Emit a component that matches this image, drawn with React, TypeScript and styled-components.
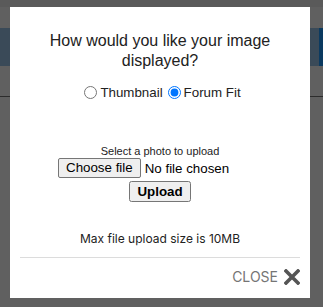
import React, { useState } from 'react';
import styled, { createGlobalStyle } from 'styled-components';

const GlobalStyle = createGlobalStyle`
    html, body {
        margin: 0;
        padding: 0;
        background: #606060;
        font-family: 'Liberation Sans', Arial, sans-serif;
        overflow: hidden;
    }
`;

const Page = styled.div`
    width: 323px;
    height: 307px;
    display: flex;
    flex-direction: column;
    background: #606060;
`;

const TopStrip = styled.div`
    height: 7px;
    background: #5a5a5a;
`;

const Spacer = styled.div<{ $h: number }>`
    height: ${p => p.$h}px;
`;

const Band = styled.div`
    height: 38px;
    background: #3a4a58;
    display: flex;
    justify-content: flex-end;
    .accent{
        width: 4px;
        background: #0b3a60;
    }
`;

const Rule = styled.div`
    height: 1px;
    background: #2c2c2c;
`;

const Modal = styled.div`
    position: fixed;
    left: 10px;
    top: 7px;
    width: 300px;
    height: 291px;
    box-sizing: border-box;
    background: #fff;
    padding: 24px 10px 0;
    display: flex;
    flex-direction: column;
    align-items: stretch;
    text-align: center;
    color: #222;
`;

const Title = styled.h2`
    margin: 0;
    font-size: 16px;
    line-height: 20px;
    font-weight: normal;
    color: #222;
`;

const RadioRow = styled.div`
    margin-top: 14px;
    font-size: 13.333px;
    display: flex;
    justify-content: center;
    align-items: center;
    label{
        display: flex;
        align-items: center;
    }
    input{
        margin: 0 3px 0 5px;
    }
`;

const UploadForm = styled.form`
    margin-top: 45px;
    display: flex;
    flex-direction: column;
    align-items: center;
`;

const Hint = styled.div`
    font-size: 11px;
    line-height: 13px;
`;

const FileRow = styled.label`
    width: 204px;
    display: flex;
    align-items: center;
    gap: 4px;
    font-size: 13.333px;
    cursor: pointer;
    input{
        display: none;
    }
`;

const ChooseButton = styled.span`
    box-sizing: border-box;
    height: 20px;
    padding: 1px 7px;
    line-height: 16px;
    border: 1px solid #767676;
    border-radius: 2px;
    background: #efefef;
    color: #000;
`;

const FileName = styled.span`
    color: #000;
    white-space: nowrap;
`;

const UploadButton = styled.button`
    margin-top: 3px;
    font-weight: bold;
    font-size: 13.333px;
    font-family: 'Liberation Sans', Arial, sans-serif;
`;

const SizeNote = styled.p`
    margin: 29px 0 0;
    font-family: Inter, sans-serif;
    font-size: 12px;
    line-height: 16px;
    color: #222;
`;

const Divider = styled.hr`
    margin: 10px 0 0;
    border: none;
    border-top: 1px solid #dcdcdc;
`;

const Footer = styled.div`
    margin-top: 10px;
    display: flex;
    justify-content: flex-end;
    align-items: center;
    gap: 6px;
`;

const CloseLabel = styled.span`
    font-family: Inter, sans-serif;
    font-size: 14px;
    color: #757575;
`;

const CloseIcon = () => (
    <svg width="16" height="16" viewBox="0 0 16 16">
        <path d="M2 2 L14 14 M14 2 L2 14" stroke="#555" strokeWidth="3.6" strokeLinecap="square" />
    </svg>
);

const App = () => {
    const [fileName, setFileName] = useState('No file chosen');
    return (
        <>
            <GlobalStyle />
            <Page>
                <TopStrip />
                <Spacer $h={21} />
                <Band><div className='accent' /></Band>
                <Spacer $h={30} />
                <Rule />
            </Page>
            <Modal>
                <Title>How would you like your image displayed?</Title>
                <RadioRow>
                    <label><input type="radio" name="display" value="thumbnail" />Thumbnail</label>
                    <label><input type="radio" name="display" value="forum" defaultChecked />Forum Fit</label>
                </RadioRow>
                <UploadForm onSubmit={e => e.preventDefault()}>
                    <Hint>Select a photo to upload</Hint>
                    <FileRow>
                        <input
                            type="file"
                            accept="image/*"
                            onChange={e => setFileName(e.target.files?.[0]?.name ?? 'No file chosen')}
                        />
                        <ChooseButton>Choose file</ChooseButton>
                        <FileName>{fileName}</FileName>
                    </FileRow>
                    <UploadButton type="submit">Upload</UploadButton>
                </UploadForm>
                <SizeNote>Max file upload size is 10MB</SizeNote>
                <Divider />
                <Footer>
                    <CloseLabel>CLOSE</CloseLabel>
                    <CloseIcon />
                </Footer>
            </Modal>
        </>
    )
}
export default App;
